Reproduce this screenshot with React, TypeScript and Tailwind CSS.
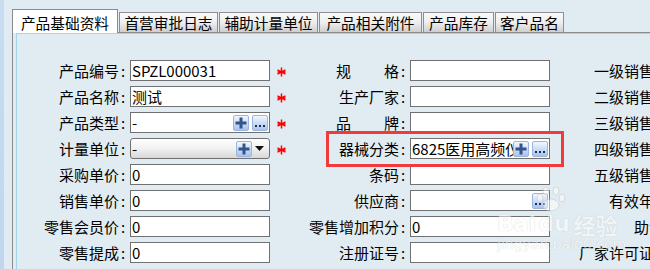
import React from "react";

function PlusBtn() {
  return (
    <span className="flex h-[16px] w-[16px] shrink-0 items-center justify-center rounded-[2px] border border-[#9cb5dd] bg-linear-to-b from-[#f2f7fe] to-[#a8c3ee]">
      <svg width="12" height="12" viewBox="0 0 12 12">
        <path d="M6 0.5v11M0.5 6h11" stroke="#34558a" strokeWidth="3" />
      </svg>
    </span>
  );
}

function DotsBtn() {
  return (
    <span className="flex h-[16px] w-[16px] shrink-0 items-end justify-center rounded-[2px] border border-[#9cb5dd] bg-linear-to-b from-[#f2f7fe] to-[#a8c3ee] pb-[3px]">
      <svg width="10" height="2" viewBox="0 0 10 2">
        <rect x="0" y="0" width="2" height="2" fill="#1d2d4d" />
        <rect x="4" y="0" width="2" height="2" fill="#1d2d4d" />
        <rect x="8" y="0" width="2" height="2" fill="#1d2d4d" />
      </svg>
    </span>
  );
}

function Star() {
  return (
    <svg width="9" height="10" viewBox="0 0 9 10" className="mt-[3px]">
      <path d="M4.5 0.5v9M0.5 2.8l8 4.4M8.5 2.8l-8 4.4M0.5 5h8" stroke="#ff0000" strokeWidth="1.5" />
    </svg>
  );
}

function Colon() {
  return <span className="inline-block w-[8px] text-center">:</span>;
}

function Label({ text, w, justify, extra }: { text: string; w: string; justify?: boolean; extra?: string }) {
  if (justify) {
    const chars = text.split("");
    return (
      <div className={`flex shrink-0 items-center justify-end whitespace-nowrap ${w}`}>
        <span className="flex w-[63px] justify-between">
          {chars.map((c, i) => (
            <span key={i}>{c}</span>
          ))}
        </span>
        <Colon />
      </div>
    );
  }
  return (
    <div className={`flex shrink-0 items-center whitespace-nowrap ${w} ${extra ?? "justify-end"}`}>
      <span>{text}</span>
      <Colon />
    </div>
  );
}

function Input({ value, plus, dots }: { value?: string; plus?: boolean; dots?: boolean }) {
  return (
    <div className="flex h-[21px] w-[140px] shrink-0 items-center overflow-hidden border border-[#717171] bg-white pr-px">
      <span className="min-w-0 flex-1 overflow-hidden whitespace-nowrap pl-px">{value}</span>
      {plus && <PlusBtn />}
      {plus && dots && <span className="w-[3px]" />}
      {dots && <DotsBtn />}
    </div>
  );
}

function Select({ value }: { value: string }) {
  return (
    <div className="flex h-[21px] w-[140px] shrink-0 items-center overflow-hidden rounded-[3px] border border-[#717171] bg-linear-to-b from-white via-[#f1f1f1] to-[#d9d9d9] pr-[5px]">
      <span className="flex-1 pl-px">{value}</span>
      <PlusBtn />
      <svg width="9" height="5" viewBox="0 0 9 5" className="ml-[3px]">
        <path d="M0 0h9L4.5 5z" fill="#111" />
      </svg>
    </div>
  );
}

type Row = {
  l: string;
  v: React.ReactNode;
  star?: boolean;
  m: string;
  mj?: boolean;
  mv: React.ReactNode;
  r: string;
  rextra?: string;
};

const rows: Row[] = [
  { l: "产品编号", v: <Input value="SPZL000031" />, star: true, m: "规格", mj: true, mv: <Input />, r: "一级销售价" },
  { l: "产品名称", v: <Input value="测试" />, star: true, m: "生产厂家", mv: <Input />, r: "二级销售价" },
  { l: "产品类型", v: <Input value="-" plus dots />, star: true, m: "品牌", mj: true, mv: <Input />, r: "三级销售价" },
  { l: "计量单位", v: <Select value="-" />, star: true, m: "器械分类", mv: <Input value="6825医用高频仪器" plus dots />, r: "四级销售价" },
  { l: "采购单价", v: <Input value="0" />, m: "条码", mv: <Input />, r: "五级销售价" },
  { l: "销售单价", v: <Input value="0" />, m: "供应商", mv: <Input dots />, r: "有效年限" },
  { l: "零售会员价", v: <Input value="0" />, m: "零售增加积分", mv: <Input value="0" />, r: "助记码", rextra: "justify-start pl-[84px]" },
  { l: "零售提成", v: <Input value="0" />, m: "注册证号", mv: <Input />, r: "厂家许可证号" },
];

const tabs = [
  { t: "首营审批日志", w: "w-[99px]" },
  { t: "辅助计量单位", w: "w-[99px]" },
  { t: "产品相关附件", w: "w-[103px]" },
  { t: "产品库存", w: "w-[71px]" },
  { t: "客户品名", w: "w-[69px]" },
];

export default function App() {
  return (
    <div className="relative flex h-[269px] w-[650px] overflow-hidden bg-[#e1ecf2] font-['Noto_Sans_CJK_SC',sans-serif] text-[15px] leading-[21px] text-black">
      <div className="w-[4px] shrink-0 bg-linear-to-b from-[#c9ddf1] to-[#bfd6ee]" />
      <div className="ml-[8px] mt-[9px] flex min-w-0 flex-1 flex-col">
        {/* tab bar */}
        <div className="flex h-[24px] shrink-0">
          <div className="flex h-[24px] w-[106px] shrink-0 items-center justify-center border-x border-t border-[#8c8c8c] bg-white pt-px text-[14.7px]">
            产品基础资料
          </div>
          <div className="flex flex-1 items-end border-b border-[#8c8c8c]">
            {tabs.map((t) => (
              <div
                key={t.t}
                className={`ml-px flex h-[20px] shrink-0 items-center justify-center whitespace-nowrap border-x border-t border-[#8f8f8f] bg-linear-to-b from-[#fafafa] via-[#eeeeee] to-[#cfcfcf] text-[14.7px] ${t.w}`}
              >
                {t.t}
              </div>
            ))}
          </div>
        </div>
        {/* panel */}
        <div className="flex flex-1 border-l border-[#8c8c8c] pl-[3px]">
          <div className="flex flex-1 flex-col gap-[5px] border-l border-t border-[#a2d6e7] pt-[26px]">
            {rows.map((r, i) => (
              <div key={i} className="flex h-[21px] items-center">
                <Label text={r.l} w="w-[110px]" />
                <div className="ml-[3px]">{r.v}</div>
                <div className="flex h-[21px] w-[20px] shrink-0 items-center pl-[7px]">{r.star && <Star />}</div>
                <Label text={r.m} w="w-[117px]" justify={r.mj} />
                <div className="ml-[3px]">{r.mv}</div>
                <Label text={r.r} w="w-[127px]" extra={r.rextra} />
              </div>
            ))}
          </div>
        </div>
      </div>

      {/* highlight box */}
      <div className="absolute left-[326px] top-[131px] h-[36px] w-[238px] border-[3px] border-[#ef3b3b]" />

      {/* watermark */}
      <div className="pointer-events-none absolute left-[497px] top-[186px] flex flex-col items-start opacity-50">
        <svg width="40" height="26" viewBox="0 0 40 26" className="ml-[34px]">
          <ellipse cx="20" cy="19" rx="8" ry="6" fill="white" stroke="#c8c8c8" />
          <ellipse cx="9" cy="12" rx="3" ry="4" fill="white" stroke="#c8c8c8" />
          <ellipse cx="15" cy="5" rx="3" ry="4" fill="white" stroke="#c8c8c8" />
          <ellipse cx="25" cy="5" rx="3" ry="4" fill="white" stroke="#c8c8c8" />
          <ellipse cx="31" cy="12" rx="3" ry="4" fill="white" stroke="#c8c8c8" />
        </svg>
        <div className="flex items-center font-['DejaVu_Sans',sans-serif] text-[22px] leading-[24px] font-bold text-white [text-shadow:0_0_1px_#9a9a9a]">
          <span>Bai</span>
          <span className="ml-[2px]">du</span>
          <span className="ml-[4px] font-['Noto_Sans_CJK_SC',sans-serif]">经验</span>
        </div>
        <div className="font-['DejaVu_Sans',sans-serif] text-[14px] leading-[16px] text-white [text-shadow:0_0_1px_#9a9a9a]">
          jingyan.baidu.com
        </div>
      </div>
    </div>
  );
}
